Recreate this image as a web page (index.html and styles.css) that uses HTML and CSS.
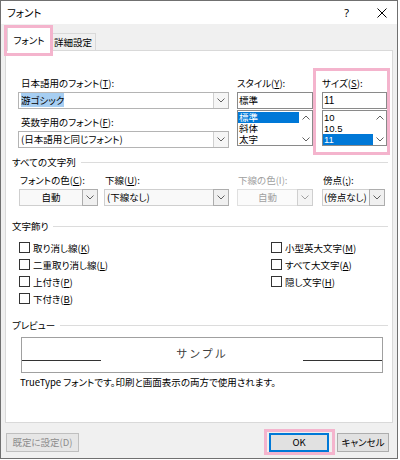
FILE: index.html
```html
<html>

<head>
    <meta charset="utf-8">
    <link rel="stylesheet" href="styles.css">
</head>

<body>
    <div class="window">
        <div class="titlebar">
            <span class="title">フォント</span>
            <span class="help">?</span>
            <svg class="close" width="10" height="10" viewBox="0 0 10 10">
                <path d="M0.5 0.5 L9.5 9.5 M9.5 0.5 L0.5 9.5" stroke="#000" stroke-width="1" fill="none" />
            </svg>
        </div>

        <div class="tabs">
            <div class="tab active">フォント</div>
            <div class="tab">詳細設定</div>
        </div>

        <div class="panel">
            <div class="font-row">
                <div class="col col-font">
                    <div class="label">日本語用のフォント(<u>T</u>):</div>
                    <div class="combo">
                        <span class="value"><span class="sel">游ゴシック</span></span>
                        <span class="drop"><svg width="8" height="5" viewBox="0 0 8 5"><path d="M0.5 0.5 L4 4 L7.5 0.5" stroke="#606060" fill="none" /></svg></span>
                    </div>
                    <div class="label second">英数字用のフォント(<u>F</u>):</div>
                    <div class="combo">
                        <span class="value">(日本語用と同じフォント)</span>
                        <span class="drop"><svg width="8" height="5" viewBox="0 0 8 5"><path d="M0.5 0.5 L4 4 L7.5 0.5" stroke="#606060" fill="none" /></svg></span>
                    </div>
                </div>

                <div class="col col-style">
                    <div class="label">スタイル(<u>Y</u>):</div>
                    <div class="textbox">標準</div>
                    <div class="listbox">
                        <ul>
                            <li class="selected">標準</li>
                            <li>斜体</li>
                            <li>太字</li>
                        </ul>
                        <div class="scroll">
                            <svg width="8" height="5" viewBox="0 0 8 5"><path d="M0.5 4.5 L4 1 L7.5 4.5" stroke="#606060" fill="none" /></svg>
                            <svg width="8" height="5" viewBox="0 0 8 5"><path d="M0.5 0.5 L4 4 L7.5 0.5" stroke="#606060" fill="none" /></svg>
                        </div>
                    </div>
                </div>

                <div class="col col-size marked">
                    <div class="label">サイズ(<u>S</u>):</div>
                    <div class="textbox num">11</div>
                    <div class="listbox num">
                        <ul>
                            <li>10</li>
                            <li>10.5</li>
                            <li class="selected">11</li>
                        </ul>
                        <div class="scroll">
                            <svg width="8" height="5" viewBox="0 0 8 5"><path d="M0.5 4.5 L4 1 L7.5 4.5" stroke="#606060" fill="none" /></svg>
                            <svg width="8" height="5" viewBox="0 0 8 5"><path d="M0.5 0.5 L4 4 L7.5 0.5" stroke="#606060" fill="none" /></svg>
                        </div>
                    </div>
                </div>
            </div>

            <div class="group-title">すべての文字列</div>
            <div class="attr-row">
                <div class="cell cell-color">
                    <div class="label">フォントの色(<u>C</u>):</div>
                    <div class="combo plain center">
                        <span class="value">自動</span>
                        <span class="drop"><svg width="8" height="5" viewBox="0 0 8 5"><path d="M0.5 0.5 L4 4 L7.5 0.5" stroke="#606060" fill="none" /></svg></span>
                    </div>
                </div>
                <div class="cell cell-underline">
                    <div class="label">下線(<u>U</u>):</div>
                    <div class="combo plain">
                        <span class="value">(下線なし)</span>
                        <span class="drop"><svg width="8" height="5" viewBox="0 0 8 5"><path d="M0.5 0.5 L4 4 L7.5 0.5" stroke="#606060" fill="none" /></svg></span>
                    </div>
                </div>
                <div class="cell cell-ucolor disabled">
                    <div class="label">下線の色(I):</div>
                    <div class="combo plain center">
                        <span class="value">自動</span>
                        <span class="drop"><svg width="8" height="5" viewBox="0 0 8 5"><path d="M0.5 0.5 L4 4 L7.5 0.5" stroke="#a0a0a0" fill="none" /></svg></span>
                    </div>
                </div>
                <div class="cell cell-emph">
                    <div class="label">傍点(<u>;</u>):</div>
                    <div class="combo plain">
                        <span class="value">(傍点なし)</span>
                        <span class="drop"><svg width="8" height="5" viewBox="0 0 8 5"><path d="M0.5 0.5 L4 4 L7.5 0.5" stroke="#606060" fill="none" /></svg></span>
                    </div>
                </div>
            </div>

            <div class="group-title">文字飾り</div>
            <div class="effects">
                <div class="effects-col">
                    <div class="check"><span class="box"></span>取り消し線(<u>K</u>)</div>
                    <div class="check"><span class="box"></span>二重取り消し線(<u>L</u>)</div>
                    <div class="check"><span class="box"></span>上付き(<u>P</u>)</div>
                    <div class="check"><span class="box"></span>下付き(<u>B</u>)</div>
                </div>
                <div class="effects-col">
                    <div class="check"><span class="box"></span>小型英大文字(<u>M</u>)</div>
                    <div class="check"><span class="box"></span>すべて大文字(<u>A</u>)</div>
                    <div class="check"><span class="box"></span>隠し文字(<u>H</u>)</div>
                </div>
            </div>

            <div class="group-title">プレビュー</div>
            <div class="preview">
                <span class="base-line"></span>
                <span class="sample">サンプル</span>
                <span class="base-line"></span>
            </div>
            <p class="note">TrueType フォントです。印刷と画面表示の両方で使用されます。</p>
        </div>

        <div class="footer">
            <button class="btn disabled">既定に設定(D)</button>
            <span class="spacer"></span>
            <button class="btn default marked">OK</button>
            <button class="btn">キャンセル</button>
        </div>
    </div>
</body>

</html>
```

FILE: styles.css
```css
body {
    margin: 0;
    background: #ffffff;
    font-family: "Noto Sans CJK JP", "Noto Sans", sans-serif;
    font-size: 9.5px;
    line-height: 12px;
    font-feature-settings: "palt";
    color: #000;
}

u {
    text-decoration: underline;
    text-underline-offset: 1px;
}

.window {
    width: 398px;
    height: 459px;
    box-sizing: border-box;
    border: 1px solid #707070;
    background: #f0f0f0;
}

/* タイトルバー */
.titlebar {
    height: 23px;
    background: #fff;
    display: flex;
    align-items: center;
    padding-left: 6px;
}

.title {
    font-size: 10.5px;
    flex: 1;
}

.help {
    font-family: "Noto Sans", sans-serif;
    font-size: 11px;
    margin-right: 28px;
}

.close {
    margin-right: 10px;
}

/* タブ */
.tabs {
    height: 26px;
    display: flex;
    align-items: flex-end;
    padding-left: 6px;
}

.tab {
    height: 17px;
    width: 46px;
    line-height: 16px;
    text-align: center;
    white-space: nowrap;
    background: #f0f0f0;
    border: 1px solid #d9d9d9;
    border-bottom: none;
    box-sizing: border-box;
}

.tab.active {
    position: relative;
    z-index: 2;
    height: 24px;
    width: 43px;
    margin-bottom: -1px;
    line-height: 24px;
    background: #fff;
    border-right: none;
}

.tab.active::after {
    content: "";
    position: absolute;
    left: -4px;
    right: -3px;
    top: -3px;
    bottom: -5px;
    border: 3px solid #f4b4cd;
}

/* パネル */
.panel {
    position: relative;
    z-index: 1;
    margin: 0 4px;
    height: 373px;
    box-sizing: border-box;
    background: #fff;
    border: 1px solid #d9d9d9;
    padding: 26px 4px 0 6px;
}

.font-row {
    display: flex;
    align-items: flex-start;
}

.col-font {
    margin-left: 6px;
    width: 211px;
}

.col-style {
    margin-left: 8px;
    width: 76px;
}

.col-size {
    margin-left: 9px;
    width: 65px;
}

.marked {
    position: relative;
}

.col-size.marked::after {
    content: "";
    position: absolute;
    left: -9px;
    right: -3px;
    top: -9px;
    bottom: -9px;
    border: 3px solid #f4b4cd;
}

.label {
    height: 12px;
    white-space: nowrap;
}

.col-font .label {
    padding-left: 3px;
}

.label.second {
    margin-top: 7px;
}

.combo {
    margin-top: 3px;
    height: 17px;
    box-sizing: border-box;
    border: 1px solid #b4b4b4;
    background: #fff;
    display: flex;
}

.combo .value {
    flex: 1;
    padding-left: 2px;
    line-height: 15px;
    white-space: nowrap;
    overflow: hidden;
}

.combo .sel {
    background: #a6cef2;
}

.combo .drop {
    width: 14px;
    border-left: 1px solid #d0d0d0;
    background: #f6f6f6;
    display: flex;
    align-items: center;
    justify-content: center;
}

.combo.plain {
    border-color: #cfcfcf;
    background: #f9f9f9;
}

.combo.plain .drop {
    border: 1px solid #adadad;
    margin: -1px -1px -1px 0;
    background: #f0f0f0;
}

.combo.center .value {
    text-align: center;
    padding-left: 0;
}

.textbox {
    margin-top: 3px;
    height: 17px;
    box-sizing: border-box;
    border: 1px solid #8a8a8a;
    padding-left: 1px;
    line-height: 15px;
}

.listbox {
    margin-top: 1px;
    height: 36px;
    box-sizing: border-box;
    border: 1px solid #8a8a8a;
    display: flex;
}

.listbox ul {
    flex: 1;
    list-style: none;
    margin: 0;
    padding: 1px 0 0;
}

.listbox li {
    height: 11px;
    line-height: 11px;
    padding-left: 1px;
}

.listbox li.selected {
    background: #0078d7;
    color: #fff;
}

.num {
    font-family: "Liberation Sans", Arial, sans-serif;
    font-size: 10px;
}

.num li {
    font-size: 9.5px;
}

.scroll {
    width: 13px;
    display: flex;
    flex-direction: column;
    justify-content: space-between;
    align-items: center;
    padding: 4px 0 3px;
}

/* 見出し */
.group-title {
    display: flex;
    align-items: center;
    height: 12px;
    margin-top: 8px;
}

.group-title::after {
    content: "";
    flex: 1;
    border-top: 1px solid #dcdcdc;
    margin-left: 5px;
}

/* すべての文字列 */
.attr-row {
    display: flex;
    margin-top: 6px;
}

.cell-color {
    margin-left: 7px;
    width: 79px;
}

.cell-underline {
    margin-left: 6px;
    width: 125px;
}

.cell-ucolor {
    margin-left: 8px;
    width: 76px;
}

.cell-emph {
    margin-left: 9px;
    width: 63px;
}

.cell .label {
    padding-left: 1px;
}

.cell-emph .value {
    padding-left: 1px;
}

.disabled .label,
.disabled .value {
    color: #a0a0a0;
}

.disabled .combo {
    border-color: #e0e0e0;
    background: #fbfbfb;
}

.disabled .combo .drop {
    border-color: #cfcfcf;
    background: #f4f4f4;
}

.attr-row + .group-title {
    margin-top: 14px;
}

/* 文字飾り */
.effects {
    display: grid;
    grid-template-columns: 252px auto;
    margin-top: 7px;
    margin-left: 7px;
}

.check {
    height: 17px;
    display: flex;
    align-items: center;
    white-space: nowrap;
}

.check .box {
    width: 11px;
    height: 11px;
    box-sizing: border-box;
    border: 1px solid #333;
    background: #fff;
    margin-right: 3px;
}

.effects + .group-title {
    margin-top: 12px;
}

/* プレビュー */
.preview {
    margin: 6px 5px 0 9px;
    height: 36px;
    box-sizing: border-box;
    border: 1px solid #a0a0a0;
    display: flex;
    align-items: flex-start;
}

.base-line {
    width: 79px;
    height: 22px;
    border-bottom: 1px solid #333;
}

.sample {
    flex: 1;
    text-align: center;
    margin-top: 9px;
    font-size: 11px;
    letter-spacing: 2px;
    color: #404040;
    font-feature-settings: normal;
}

.note {
    margin: 3px 0 0 8px;
    white-space: nowrap;
}

/* ボタン */
.footer {
    display: flex;
    margin: 10px 8px 0 5px;
}

.spacer {
    flex: 1;
}

.btn {
    height: 19px;
    box-sizing: border-box;
    border: 1px solid #adadad;
    background: #e1e1e1;
    font-family: inherit;
    font-size: 9.5px;
    line-height: 17px;
    padding: 0;
    width: 52px;
    font-feature-settings: "palt";
}

.btn.disabled {
    width: 73px;
    color: #8d8d8d;
    border-color: #bfbfbf;
    background: #e6e6e6;
}

.btn.default {
    width: 60px;
    margin-right: 8px;
    border: 1px solid #0078d7;
    box-shadow: inset 0 0 0 1px #0078d7;
}

.btn.marked::after {
    content: "";
    position: absolute;
    left: -6px;
    right: -7px;
    top: -5px;
    bottom: -4px;
    border: 3px solid #f4b4cd;
}
```
